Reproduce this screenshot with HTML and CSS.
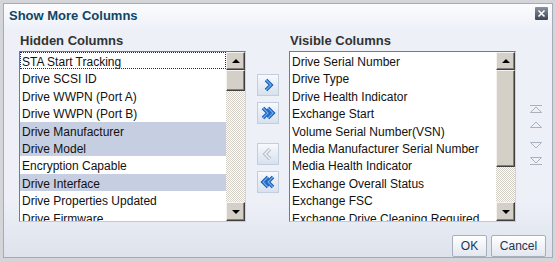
FILE: index.html
```html
<!DOCTYPE html>
<html lang="en">
<head>
    <meta charset="UTF-8">
    <title>Show More Columns</title>
    <link rel="stylesheet" href="styles.css">
</head>
<body>

<div class="dialog">
    <!-- Title bar -->
    <div class="title-bar">
        <span class="title">Show More Columns</span>
        <span class="close-btn">
            <svg width="13" height="13" viewBox="0 0 13 13"><path d="M3.5 3.5 L9.5 9.5 M9.5 3.5 L3.5 9.5" stroke="#fff" stroke-width="1.6" fill="none"/></svg>
        </span>
    </div>

    <div class="dialog-body">
        <!-- Hidden columns -->
        <div class="column">
            <div class="column-label">Hidden Columns</div>
            <div class="listbox">
                <div class="items">
                    <div class="item focused">STA Start Tracking</div>
                    <div class="item">Drive SCSI ID</div>
                    <div class="item">Drive WWPN (Port A)</div>
                    <div class="item">Drive WWPN (Port B)</div>
                    <div class="item selected">Drive Manufacturer</div>
                    <div class="item selected">Drive Model</div>
                    <div class="item">Encryption Capable</div>
                    <div class="item selected">Drive Interface</div>
                    <div class="item">Drive Properties Updated</div>
                    <div class="item">Drive Firmware</div>
                </div>
                <div class="scrollbar">
                    <div class="sb-btn"><span class="arrow-up"></span></div>
                    <div class="sb-thumb short"></div>
                    <div class="sb-track"></div>
                    <div class="sb-btn"><span class="arrow-down"></span></div>
                </div>
            </div>
        </div>

        <!-- Move buttons -->
        <div class="movers">
            <div class="move-btn">
                <svg width="22" height="22" viewBox="0 0 22 22"><polyline points="9,6 14,11 9,16" class="chev-out"/><polyline points="9,6 14,11 9,16" class="chev-in"/></svg>
            </div>
            <div class="move-btn">
                <svg width="22" height="22" viewBox="0 0 22 22"><polyline points="6,6 11,11 6,16" class="chev-out"/><polyline points="11,6 16,11 11,16" class="chev-out"/><polyline points="6,6 11,11 6,16" class="chev-in"/><polyline points="11,6 16,11 11,16" class="chev-in"/></svg>
            </div>
            <div class="move-btn disabled gap-big">
                <svg width="22" height="22" viewBox="0 0 22 22"><polyline points="13,6 8,11 13,16" class="chev-out"/><polyline points="13,6 8,11 13,16" class="chev-in"/></svg>
            </div>
            <div class="move-btn">
                <svg width="22" height="22" viewBox="0 0 22 22"><polyline points="11,6 6,11 11,16" class="chev-out"/><polyline points="16,6 11,11 16,16" class="chev-out"/><polyline points="11,6 6,11 11,16" class="chev-in"/><polyline points="16,6 11,11 16,16" class="chev-in"/></svg>
            </div>
        </div>

        <!-- Visible columns -->
        <div class="column">
            <div class="column-label">Visible Columns</div>
            <div class="listbox">
                <div class="items">
                    <div class="item">Drive Serial Number</div>
                    <div class="item">Drive Type</div>
                    <div class="item">Drive Health Indicator</div>
                    <div class="item">Exchange Start</div>
                    <div class="item">Volume Serial Number(VSN)</div>
                    <div class="item">Media Manufacturer Serial Number</div>
                    <div class="item">Media Health Indicator</div>
                    <div class="item">Exchange Overall Status</div>
                    <div class="item">Exchange FSC</div>
                    <div class="item">Exchange Drive Cleaning Required</div>
                </div>
                <div class="scrollbar">
                    <div class="sb-btn"><span class="arrow-up"></span></div>
                    <div class="sb-thumb long"></div>
                    <div class="sb-track"></div>
                    <div class="sb-btn"><span class="arrow-down"></span></div>
                </div>
            </div>
        </div>

        <!-- Reorder buttons (disabled) -->
        <div class="reorder">
            <svg width="14" height="8" viewBox="0 0 14 8"><path d="M1 0.5 H13 M1.5 7.5 L7 2 L12.5 7.5 Z" class="tri"/></svg>
            <svg width="14" height="8" viewBox="0 0 14 8" class="r-up"><path d="M1.5 7.5 L7 2 L12.5 7.5 Z" class="tri"/></svg>
            <svg width="14" height="8" viewBox="0 0 14 8" class="r-down"><path d="M1.5 0.5 L7 6 L12.5 0.5 Z" class="tri"/></svg>
            <svg width="14" height="8" viewBox="0 0 14 8" class="r-bottom"><path d="M1.5 0.5 L7 6 L12.5 0.5 Z M1 7.5 H13" class="tri"/></svg>
        </div>
    </div>

    <div class="footer">
        <button type="button" class="btn ok">OK</button>
        <button type="button" class="btn cancel">Cancel</button>
    </div>
</div>

</body>
</html>
```

FILE: styles.css
```css
body {
    margin: 0;
    background: #d3d5d9;
    font-family: 'Liberation Sans', Arial, sans-serif;
}

.dialog {
    margin: 3px 3px 0 3px;
    width: 548px;
    height: 253px;
    border: 1px solid #a3abb6;
    background: linear-gradient(#edf0f7 78%, #dde2ec);
    display: flex;
    flex-direction: column;
}

.title-bar {
    height: 25px;
    display: flex;
    align-items: center;
    justify-content: space-between;
    padding: 0 4px 0 5px;
    background: linear-gradient(#fbfcfe, #eef1f8);
}

.title {
    font-size: 13px;
    font-weight: bold;
    color: #0f4566;
    margin-top: -2px;
}

.close-btn {
    width: 13px;
    height: 13px;
    margin-top: -6px;
    background: linear-gradient(#8a93a1, #3d4553);
    border-radius: 1px;
    display: flex;
}

.dialog-body {
    display: flex;
    padding: 4px 0 0 15px;
}

.column {
    width: 227px;
}

.column-label {
    font-size: 13px;
    font-weight: bold;
    color: #333;
    line-height: 16px;
    margin-bottom: 2px;
    padding-left: 1px;
}

.listbox {
    height: 169px;
    border: 1px solid;
    border-color: #7a7a7a #d4d4d4 #c8c8c8 #7a7a7a;
    background: #fff;
    display: flex;
}

.items {
    flex: 1;
    overflow: hidden;
}

.item {
    height: 17.4px;
    line-height: 17.4px;
    padding-top: 2px;
    font-size: 12px;
    color: #111;
    padding-left: 2px;
    white-space: nowrap;
    box-sizing: border-box;
}

.item.selected {
    background: #c6cee1;
}

.item.focused {
    outline: 1px dotted #1a2a6a;
    outline-offset: -1px;
}

/* Classic scrollbar */
.scrollbar {
    width: 19px;
    display: flex;
    flex-direction: column;
}

.sb-btn, .sb-thumb {
    box-sizing: border-box;
    background: #d4d0c8;
    border: 1px solid;
    border-color: #f4f3f0 #404040 #404040 #f4f3f0;
    box-shadow: inset -1px -1px #808080;
}

.sb-btn {
    height: 18px;
    display: flex;
    align-items: center;
    justify-content: center;
}

.sb-btn:last-child {
    height: 19px;
}

.sb-thumb.short {
    height: 21px;
}

.sb-thumb.long {
    height: 97px;
}

.sb-track {
    flex: 1;
    background-color: #fff;
    background-image: conic-gradient(#d4d0c8 25%, #fff 0 50%, #d4d0c8 0 75%, #fff 0);
    background-size: 2px 2px;
}

.arrow-up {
    width: 0;
    height: 0;
    border-left: 4px solid transparent;
    border-right: 4px solid transparent;
    border-bottom: 4px solid #000;
}

.arrow-down {
    width: 0;
    height: 0;
    border-left: 4px solid transparent;
    border-right: 4px solid transparent;
    border-top: 4px solid #000;
}

/* Move buttons between the lists */
.movers {
    width: 22px;
    margin: 0 10px 0 11px;
    padding-top: 41px;
    display: flex;
    flex-direction: column;
    gap: 6px;
}

.move-btn {
    width: 22px;
    height: 22px;
    box-sizing: border-box;
    border: 1px solid #c3cedd;
    background: linear-gradient(#f7f9fd, #d7e1ef);
    display: flex;
    align-items: center;
    justify-content: center;
}

.move-btn svg {
    margin: -1px;
}

.move-btn.gap-big {
    margin-top: 13px;
}

.chev-out {
    fill: none;
    stroke: #1d58b0;
    stroke-width: 3.6;
    stroke-linejoin: miter;
}

.chev-in {
    fill: none;
    stroke: #5fb0f4;
    stroke-width: 1.4;
}

.move-btn.disabled .chev-out {
    stroke: #b9bec7;
}

.move-btn.disabled .chev-in {
    stroke: #f2f3f5;
}

/* Reorder arrows on the right */
.reorder {
    margin-left: 13px;
    padding-top: 72px;
    display: flex;
    flex-direction: column;
}

.reorder .r-up {
    margin-top: 7px;
}

.reorder .r-down {
    margin-top: 14px;
}

.reorder .r-bottom {
    margin-top: 7px;
}

.tri {
    fill: none;
    stroke: #a9b1bd;
    stroke-width: 1;
}

.footer {
    display: flex;
    justify-content: flex-end;
    gap: 4px;
    padding: 13px 6px 0 0;
}

.btn {
    height: 22px;
    padding: 0;
    font-family: 'Liberation Sans', Arial, sans-serif;
    font-size: 12px;
    color: #1c3550;
    background: linear-gradient(#ffffff, #e2e7ef);
    border: 1px solid #a7afba;
    border-radius: 2px;
}

.btn.ok {
    width: 35px;
}

.btn.cancel {
    width: 55px;
}
```
